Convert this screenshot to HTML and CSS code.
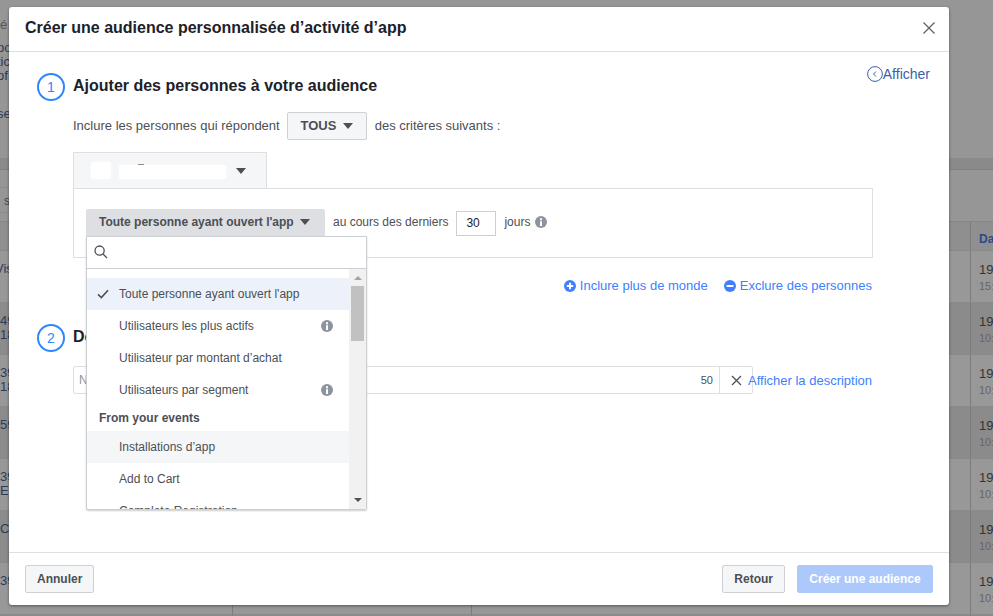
FILE: index.html
```html
<!DOCTYPE html>
<html lang="fr">
<head>
    <meta charset="UTF-8">
    <meta name="viewport" content="width=device-width, initial-scale=1.0">
    <title>Créer une audience</title>
    <link rel="stylesheet" href="styles.css">
</head>
<body>
    <!-- Dimmed page behind the dialog -->
    <div class="backdrop">
        <div class="bg-top">
            <p class="bg-line bg-grey">é</p>
            <p class="bg-line bg-gap">po</p>
            <p class="bg-line">tic</p>
            <p class="bg-line">of</p>
            <p class="bg-line bg-gap2">se</p>
        </div>
        <div class="bg-band"></div>
        <div class="bg-tools"><span class="bg-tool">s</span></div>
        <div class="bg-row bg-head"><span></span><span></span><span></span><span class="bg-cell-date"><b>Da</b></span></div>
        <div class="bg-row"><span class="bg-cell-name"><i class="bg-vis">Vis</i></span><span></span><span></span><span class="bg-cell-date">19.<small>15:</small></span></div>
        <div class="bg-row bg-dark"><span class="bg-cell-name">49%<br>18</span><span></span><span></span><span class="bg-cell-date">19.<small>10:</small></span></div>
        <div class="bg-row"><span class="bg-cell-name">39%<br>18</span><span></span><span></span><span class="bg-cell-date">19.<small>10:</small></span></div>
        <div class="bg-row bg-dark"><span class="bg-cell-name">59%</span><span></span><span></span><span class="bg-cell-date">19.<small>10:</small></span></div>
        <div class="bg-row"><span class="bg-cell-name">39%<br>E_</span><span></span><span></span><span class="bg-cell-date">19.<small>10:</small></span></div>
        <div class="bg-row bg-dark"><span class="bg-cell-name">CL</span><span></span><span></span><span class="bg-cell-date">19.<small>10:</small></span></div>
        <div class="bg-row"><span class="bg-cell-name">39%</span><span></span><span></span><span class="bg-cell-date">19.<small>10:</small></span></div>
        <div class="bg-row bg-dark"><span></span><span></span><span></span><span></span></div>
    </div>

    <div class="dialog">
        <div class="dialog-head">
            <h2>Créer une audience personnalisée d’activité d’app</h2>
            <svg class="close-icon" width="12" height="12" viewBox="0 0 12 12"><path d="M0.5 0.5l11 11M11.5 0.5l-11 11"/></svg>
        </div>

        <div class="dialog-body">
            <a class="show-link">
                <svg width="16" height="16" viewBox="0 0 16 16"><circle cx="8" cy="8" r="7.4"/><path d="M9 5.5L6.5 8 9 10.5"/></svg>
                Afficher
            </a>

            <!-- Step 1 -->
            <div class="step-title">
                <span class="step-num">1</span>
                <h3>Ajouter des personnes à votre audience</h3>
            </div>
            <div class="step-content">
                <div class="include-row">
                    <span>Inclure les personnes qui répondent</span>
                    <button class="btn btn-all">TOUS <i class="caret"></i></button>
                    <span>des critères suivants :</span>
                </div>

                <div class="source-tab">
                    <span class="blot blot-a"></span>
                    <span class="blot blot-b"></span>
                    <i class="caret"></i>
                </div>
                <div class="rule-box">
                    <button class="btn-event">Toute personne ayant ouvert l'app <i class="caret"></i></button>
                    <span>au cours des derniers</span>
                    <input class="days" type="text" value="30">
                    <span>jours</span>
                    <svg class="info" width="12" height="12" viewBox="0 0 12 12"><circle cx="6" cy="6" r="6"/><path d="M5 5.2h2V10H5zM5 2.2h2v2H5z"/></svg>
                </div>

                <div class="person-links">
                    <a class="person-link">
                        <svg width="12" height="12" viewBox="0 0 12 12"><circle cx="6" cy="6" r="6"/><path d="M5 2.8h2V5h2.2v2H7v2.2H5V7H2.8V5H5z"/></svg>
                        Inclure plus de monde
                    </a>
                    <a class="person-link">
                        <svg width="12" height="12" viewBox="0 0 12 12"><circle cx="6" cy="6" r="6"/><path d="M2.6 5h6.8v2H2.6z"/></svg>
                        Exclure des personnes
                    </a>
                </div>
            </div>

            <!-- Step 2 -->
            <div class="step-title step-two">
                <span class="step-num">2</span>
                <h3>Donner un nom à votre audience</h3>
            </div>
            <div class="step-content name-row">
                <div class="name-field">
                    <input type="text" placeholder="Nommer votre audience">
                    <span class="count">50</span>
                    <span class="clear">
                        <svg width="11" height="11" viewBox="0 0 11 11"><path d="M1 1l9 9M10 1l-9 9"/></svg>
                    </span>
                </div>
                <a class="desc-link">Afficher la description</a>
            </div>

            <!-- Event dropdown -->
            <div class="menu">
                <div class="menu-search">
                    <svg width="14" height="14" viewBox="0 0 14 14"><circle cx="5.6" cy="5.6" r="4.6"/><path d="M9 9l4 4"/></svg>
                </div>
                <div class="menu-main">
                    <ul class="menu-list">
                        <li class="selected">
                            <svg class="check" width="12" height="10" viewBox="0 0 12 10"><path d="M1 5.4l3.4 3.2L11 1.2"/></svg>
                            Toute personne ayant ouvert l'app
                        </li>
                        <li>Utilisateurs les plus actifs
                            <svg class="info" width="12" height="12" viewBox="0 0 12 12"><circle cx="6" cy="6" r="6"/><path d="M5 5.2h2V10H5zM5 2.2h2v2H5z"/></svg>
                        </li>
                        <li>Utilisateur par montant d’achat</li>
                        <li>Utilisateurs par segment
                            <svg class="info" width="12" height="12" viewBox="0 0 12 12"><circle cx="6" cy="6" r="6"/><path d="M5 5.2h2V10H5zM5 2.2h2v2H5z"/></svg>
                        </li>
                        <li class="menu-group">From your events</li>
                        <li class="hovered">Installations d’app</li>
                        <li>Add to Cart</li>
                        <li>Complete Registration</li>
                    </ul>
                    <div class="scrollbar">
                        <i class="arrow-up"></i>
                        <div class="thumb"></div>
                        <i class="arrow-down"></i>
                    </div>
                </div>
            </div>
        </div>

        <div class="dialog-foot">
            <button class="btn">Annuler</button>
            <span class="foot-space"></span>
            <button class="btn">Retour</button>
            <button class="btn btn-primary">Créer une audience</button>
        </div>
    </div>
</body>
</html>
```

FILE: styles.css
```css
* {
    box-sizing: border-box;
}

html, body {
    height: 100%;
}

body {
    margin: 0;
    overflow: hidden;
    font-family: "Liberation Sans", Arial, sans-serif;
    font-size: 12px;
    color: #4b4f56;
    background: #969696;
}

/* backdrop */
.backdrop {
    height: 616px;
    overflow: hidden;
    color: #2c3a58;
}

.bg-top {
    height: 158px;
    padding-top: 18px;
}

.bg-line {
    margin: 0 0 0 -3px;
    height: 14px;
    line-height: 14px;
    font-size: 13px;
}

.bg-grey {
    margin-left: 0;
    color: #555;
}

.bg-gap {
    margin-top: 9px;
}

.bg-gap2 {
    margin-top: 24px;
}

.bg-band {
    height: 12px;
    background: #8a8a8a;
    border-bottom: 1px solid #828282;
}

.bg-tools {
    height: 52px;
    padding-top: 17px;
    border-bottom: 1px solid #868686;
    color: #444;
}

.bg-tool {
    display: block;
    width: 40px;
    height: 26px;
    padding-left: 4px;
    line-height: 26px;
    border: 1px solid #8a8a8a;
    border-left: 0;
    font-size: 12px;
}

.bg-row {
    display: grid;
    grid-template-columns: 232px 239px 499px 1fr;
    height: 52px;
    background: #989898;
    border-bottom: 1px solid #8a8a8a;
}

.bg-row span + span {
    border-left: 1px solid #7c7c7c;
}

.bg-head {
    height: 29px;
    background: #8f8f8f;
}

.bg-head b {
    color: #2a4a8c;
    font-size: 12px;
}

.bg-dark {
    background: #8b8b8b;
}

.bg-cell-name {
    padding-top: 11px;
    line-height: 14px;
    font-size: 13px;
}

.bg-vis {
    margin-left: -5px;
    font-style: normal;
}

.bg-cell-date {
    padding: 11px 0 0 8px;
    line-height: 16px;
    font-size: 13px;
    color: #333;
}

.bg-head .bg-cell-date {
    padding-top: 9px;
}

.bg-cell-date small {
    display: block;
    font-size: 11px;
    color: #666;
}

/* dialog */
.dialog {
    position: absolute;
    left: 9px;
    top: 7px;
    width: 940px;
    height: 598px;
    display: flex;
    flex-direction: column;
    background: #fff;
    border-radius: 3px;
    box-shadow: 0 1px 3px rgba(0, 0, 0, 0.45);
}

.dialog-head {
    display: flex;
    align-items: center;
    justify-content: space-between;
    height: 45px;
    padding: 0 14px 3px 16px;
    border-bottom: 1px solid #dddfe2;
}

.dialog-head h2 {
    margin: 0;
    font-size: 16px;
    font-weight: bold;
    color: #1d2129;
}

.close-icon path {
    fill: none;
    stroke: #606770;
    stroke-width: 1.4;
}

.dialog-body {
    position: relative;
    flex: 1;
    padding: 21px 0 0 28px;
}

.show-link {
    position: absolute;
    top: 14px;
    right: 19px;
    display: flex;
    align-items: center;
    font-size: 14px;
    color: #3b5fa8;
}

.show-link svg {
    fill: none;
    stroke: #3b5fa8;
}

.step-title {
    display: flex;
    align-items: center;
    gap: 8px;
}

.step-title h3 {
    margin: 0 0 2px;
    font-size: 16px;
    font-weight: bold;
    color: #1d2129;
}

.step-num {
    width: 28px;
    height: 28px;
    line-height: 24px;
    text-align: center;
    font-size: 14px;
    color: #2d88ff;
    border: 2px solid #2d88ff;
    border-radius: 50%;
}

.step-two {
    margin-top: 31px;
}

.step-content {
    width: 800px;
    margin-left: 36px;
}

.include-row {
    display: flex;
    align-items: center;
    margin-top: 11px;
    font-size: 13px;
}

.include-row span {
    margin-bottom: 2px;
}

.btn {
    height: 28px;
    padding: 0 11px;
    font-family: inherit;
    font-size: 12px;
    font-weight: bold;
    color: #4b4f56;
    background: #f5f6f7;
    border: 1px solid #ced0d4;
    border-radius: 2px;
}

.btn-all {
    width: 80px;
    margin: 0 8px 0 7px;
    padding: 0 0 2px;
    font-size: 13px;
}

.caret {
    display: inline-block;
    margin-left: 3px;
    vertical-align: 1px;
    border-top: 6px solid #4b4f56;
    border-left: 5.5px solid transparent;
    border-right: 5.5px solid transparent;
}

.source-tab {
    display: flex;
    align-items: center;
    width: 194px;
    height: 37px;
    margin-top: 12px;
    margin-bottom: -1px;
    padding-left: 17px;
    background: #f5f6f7;
    border: 1px solid #dddfe2;
}

.blot {
    position: relative;
    display: block;
    background: #fff;
    border-radius: 3px;
    box-shadow: 0 0 2px #fff;
}

.blot-a {
    width: 20px;
    height: 17px;
}

.blot-b {
    width: 107px;
    height: 14px;
    margin: 2px 0 0 8px;
}

.blot-b::before {
    content: "";
    position: absolute;
    left: 19px;
    top: -1px;
    width: 6px;
    height: 1px;
    background: #8a8d91;
}

.source-tab .caret {
    margin-left: 10px;
}

.rule-box {
    display: flex;
    align-items: center;
    height: 70px;
    padding-left: 12px;
    border: 1px solid #dddfe2;
}

.rule-box span {
    margin-bottom: 2px;
}

.btn-event {
    width: 239px;
    height: 28px;
    margin-right: 8px;
    padding: 0 2px 2px 0;
    font-family: inherit;
    font-size: 12px;
    font-weight: bold;
    color: #4b4f56;
    background: #dddfe2;
    border: 0;
    border-radius: 2px 2px 0 0;
}

.days {
    width: 40px;
    height: 25px;
    margin: 0 8px;
    padding: 0 0 0 9px;
    font-family: inherit;
    font-size: 12px;
    color: #1d2129;
    border: 1px solid #ccd0d5;
}

.info {
    fill: #8d949e;
}

.info path {
    fill: #fff;
}

.rule-box .info {
    margin: 0 0 2px 5px;
}

.person-links {
    display: flex;
    justify-content: flex-end;
    gap: 16px;
    margin-top: 20px;
    padding-right: 1px;
}

.person-link {
    display: flex;
    align-items: center;
    gap: 4px;
    font-size: 13px;
    color: #4080ff;
}

.person-link svg {
    fill: #4080ff;
}

.person-link path {
    fill: #fff;
}

.name-row {
    display: flex;
    align-items: center;
    margin-top: 14px;
}

.name-field {
    display: flex;
    align-items: center;
    flex: none;
    width: 680px;
    height: 28px;
    border: 1px solid #dddfe2;
    border-radius: 2px;
}

.name-field input {
    flex: 1;
    min-width: 0;
    height: 100%;
    padding: 0 5px;
    font-family: inherit;
    font-size: 12px;
    border: 0;
    background: none;
}

.name-field input::placeholder {
    color: #90949c;
}

.count {
    width: 19px;
    margin-right: 6px;
    text-align: right;
    font-size: 11px;
}

.clear {
    display: flex;
    align-items: center;
    justify-content: center;
    width: 33px;
    height: 100%;
    border-left: 1px solid #dddfe2;
}

.clear path {
    stroke: #4b4f56;
    stroke-width: 1.3;
}

.desc-link {
    margin-left: -5px;
    font-size: 13px;
    color: #4080ff;
}

/* dropdown */
.menu {
    position: absolute;
    left: 77px;
    top: 184px;
    width: 281px;
    height: 274px;
    display: flex;
    flex-direction: column;
    overflow: hidden;
    background: #fff;
    border: 1px solid #ccd0d5;
    border-radius: 0 0 2px 2px;
    box-shadow: 0 1px 2px rgba(0, 0, 0, 0.2);
}

.menu-search {
    flex: none;
    height: 32px;
    padding: 8px 0 0 7px;
    border-bottom: 1px solid #ccd0d5;
}

.menu-search svg {
    fill: none;
    stroke: #4b4f56;
    stroke-width: 1.3;
}

.menu-main {
    display: flex;
    flex: 1;
    min-height: 0;
}

.menu-list {
    flex: 1;
    min-width: 0;
    margin: 0;
    padding: 9px 0 0;
    list-style: none;
    overflow: hidden;
}

.menu-list li {
    position: relative;
    display: flex;
    align-items: center;
    justify-content: space-between;
    height: 32px;
    padding: 0 16px 0 32px;
}

.menu-list .selected {
    justify-content: flex-start;
    background: #edf2fa;
}

.menu-list .hovered {
    background: #f5f6f7;
}

.menu-list .menu-group {
    height: 25px;
    padding: 0 0 2px 12px;
    font-weight: bold;
}

.check {
    position: absolute;
    left: 10px;
    top: 11px;
    fill: none;
    stroke: #4b4f56;
    stroke-width: 1.6;
}

.scrollbar {
    flex: none;
    display: flex;
    flex-direction: column;
    align-items: center;
    width: 17px;
    background: #f1f1f1;
    padding-top: 7px;
}

.thumb {
    width: 13px;
    height: 55px;
    margin-top: 6px;
    background: #c1c1c1;
}

.arrow-up,
.arrow-down {
    display: block;
    border-left: 4px solid transparent;
    border-right: 4px solid transparent;
}

.arrow-up {
    border-bottom: 4px solid #a3a3a3;
}

.arrow-down {
    margin-top: auto;
    margin-bottom: 7px;
    border-top: 4px solid #505050;
}

/* footer */
.dialog-foot {
    display: flex;
    gap: 12px;
    height: 53px;
    padding: 12px 16px;
    border-top: 1px solid #dddfe2;
}

.foot-space {
    flex: 1;
}

.btn-primary {
    width: 136px;
    padding: 0;
    color: #fff;
    background: #adc9fb;
    border-color: #adc9fb;
}
```
